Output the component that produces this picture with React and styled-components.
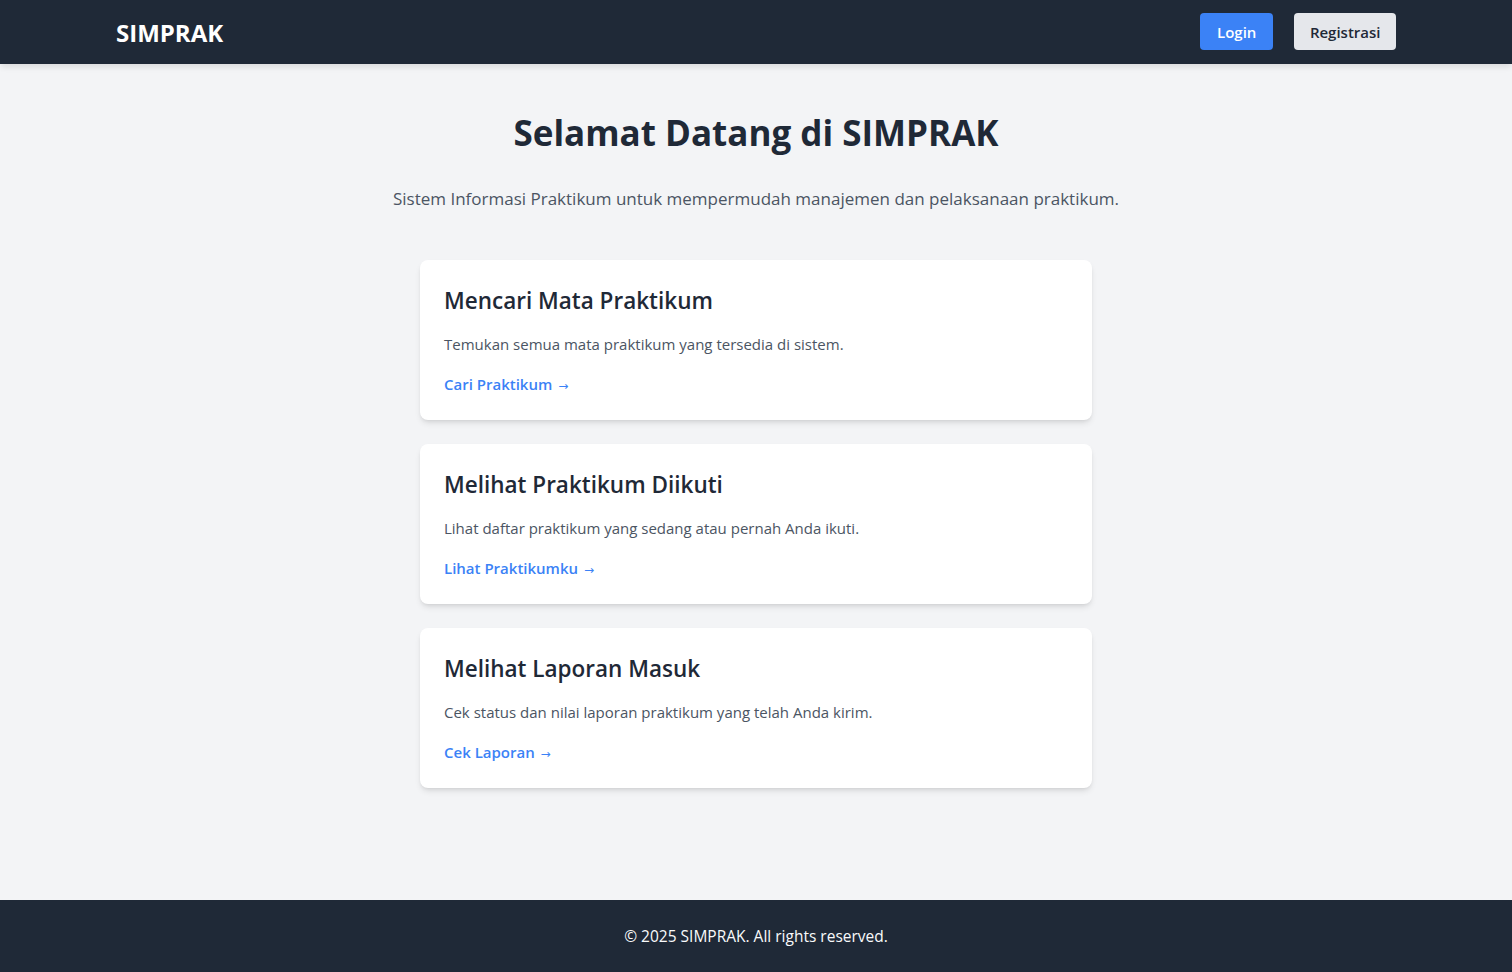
import React from 'react'
import styled, { createGlobalStyle } from 'styled-components'

const GlobalStyle = createGlobalStyle`
  * { box-sizing: border-box; }
  body {
    margin: 0;
    font-family: "Open Sans", "Noto Sans", sans-serif;
    background: #f3f4f6;
    color: #1f2937;
  }
`

const Page = styled.div`
  min-height: 100vh;
  display: flex;
  flex-direction: column;
`

const Navbar = styled.nav`
  background: #1f2937;
  height: 64px;
  box-shadow: 0 4px 6px -1px rgba(0, 0, 0, 0.1);
`

const NavInner = styled.div`
  max-width: 1280px;
  height: 100%;
  margin: 0 auto;
  display: flex;
  align-items: center;
  justify-content: space-between;
`

const Logo = styled.a`
  color: #fff;
  font-size: 24px;
  font-weight: 700;
  text-decoration: none;
`

const NavButtons = styled.div`
  display: flex;
  gap: 21px;
  margin-top: -1px;
`

const NavButton = styled.a`
  display: inline-flex;
  align-items: center;
  height: 37px;
  padding: 0 ${p => (p.primary ? '17px' : '15.5px')};
  border-radius: 4px;
  font-size: 15px;
  font-weight: 600;
  text-decoration: none;
  background: ${p => (p.primary ? '#3b82f6' : '#e5e7eb')};
  color: ${p => (p.primary ? '#fff' : '#1f2937')};
`

const Main = styled.main`
  flex: 1;
  padding: 48px 16px;
  display: flex;
  flex-direction: column;
  align-items: center;
`

const Title = styled.h1`
  margin: 0 0 32px;
  font-size: 35px;
  line-height: 42px;
  font-weight: 700;
  color: #1f2937;
  text-align: center;
`

const Subtitle = styled.p`
  margin: 0 0 48px;
  font-size: 17px;
  line-height: 26px;
  color: #4b5563;
  text-align: center;
`

const CardList = styled.div`
  width: 672px;
  display: flex;
  flex-direction: column;
  gap: 24px;
`

const Card = styled.div`
  background: #fff;
  border-radius: 8px;
  padding: 24px;
  box-shadow: 0 4px 6px -1px rgba(0, 0, 0, 0.1), 0 2px 4px -2px rgba(0, 0, 0, 0.1);
`

const CardTitle = styled.h2`
  margin: 0 0 15px;
  font-size: 22.5px;
  line-height: 33px;
  font-weight: 600;
  color: #1f2937;
`

const CardText = styled.p`
  margin: 0 0 16px;
  font-size: 15px;
  line-height: 24px;
  color: #4b5563;
`

const CardLink = styled.a`
  display: block;
  height: 24px;
  font-size: 15px;
  line-height: 24px;
  font-weight: 600;
  color: #3b82f6;
  text-decoration: none;
`

const Arrow = styled.span`
  font-family: "DejaVu Sans", sans-serif;
  font-weight: 400;
  font-size: 12px;
  line-height: 0;
  margin-left: 2px;
`

const Footer = styled.footer`
  background: #1f2937;
  color: #f9fafb;
  text-align: center;
  padding: 24px 0;
  font-size: 15.5px;
  line-height: 24px;
`

const cards = [
  {
    title: 'Mencari Mata Praktikum',
    text: 'Temukan semua mata praktikum yang tersedia di sistem.',
    link: 'Cari Praktikum'
  },
  {
    title: 'Melihat Praktikum Diikuti',
    text: 'Lihat daftar praktikum yang sedang atau pernah Anda ikuti.',
    link: 'Lihat Praktikumku'
  },
  {
    title: 'Melihat Laporan Masuk',
    text: 'Cek status dan nilai laporan praktikum yang telah Anda kirim.',
    link: 'Cek Laporan'
  }
]

export default function App() {
  return (
    <Page>
      <GlobalStyle />
      <Navbar>
        <NavInner>
          <Logo href="#">SIMPRAK</Logo>
          <NavButtons>
            <NavButton primary href="#">Login</NavButton>
            <NavButton href="#">Registrasi</NavButton>
          </NavButtons>
        </NavInner>
      </Navbar>
      <Main>
        <Title>Selamat Datang di SIMPRAK</Title>
        <Subtitle>Sistem Informasi Praktikum untuk mempermudah manajemen dan pelaksanaan praktikum.</Subtitle>
        <CardList>
          {cards.map((c, i) => (
            <Card key={i}>
              <CardTitle>{c.title}</CardTitle>
              <CardText>{c.text}</CardText>
              <CardLink href="#">{c.link} <Arrow>→</Arrow></CardLink>
            </Card>
          ))}
        </CardList>
      </Main>
      <Footer>© 2025 SIMPRAK. All rights reserved.</Footer>
    </Page>
  )
}
